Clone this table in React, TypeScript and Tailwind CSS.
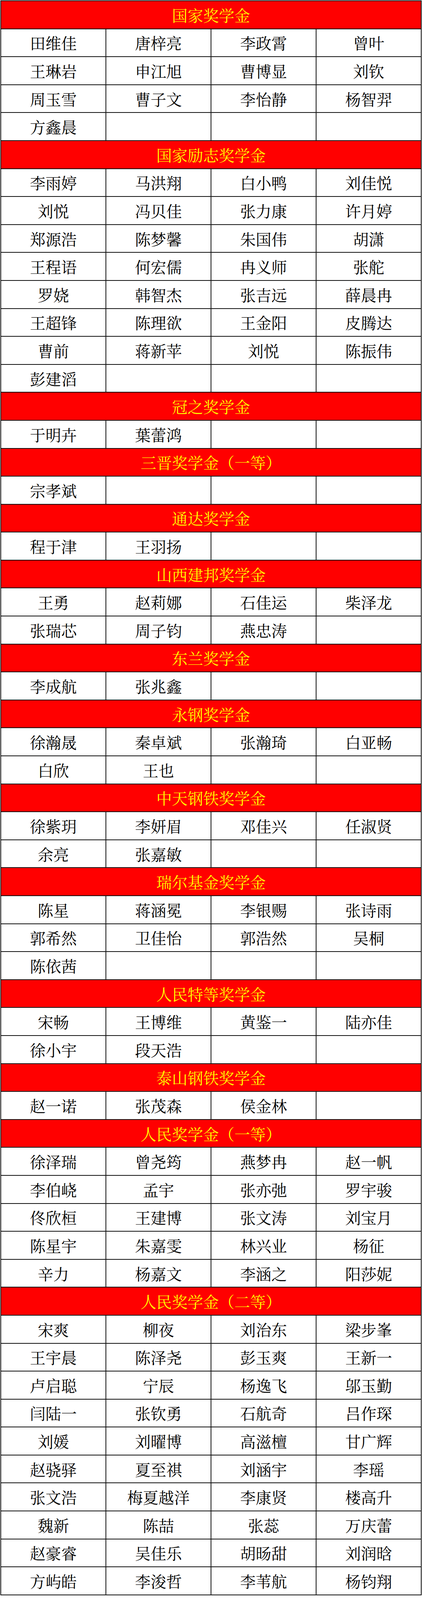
import React from 'react';

type Section = { title: string; names: string[] };

const sections: Section[] = [
  {
    title: '国家奖学金',
    names: ['田维佳', '唐梓亮', '李政霄', '曾叶', '王琳岩', '申江旭', '曹博显', '刘钦', '周玉雪', '曹子文', '李怡静', '杨智羿', '方鑫晨'],
  },
  {
    title: '国家励志奖学金',
    names: [
      '李雨婷', '马洪翔', '白小鸭', '刘佳悦',
      '刘悦', '冯贝佳', '张力康', '许月婷',
      '郑源浩', '陈梦馨', '朱国伟', '胡潇',
      '王程语', '何宏儒', '冉义师', '张舵',
      '罗娆', '韩智杰', '张吉远', '薛晨冉',
      '王超锋', '陈理欲', '王金阳', '皮腾达',
      '曹前', '蒋新苹', '刘悦', '陈振伟',
      '彭建滔',
    ],
  },
  { title: '冠之奖学金', names: ['于明卉', '葉蕾鸿'] },
  { title: '三晋奖学金（一等）', names: ['宗孝斌'] },
  { title: '通达奖学金', names: ['程于津', '王羽扬'] },
  { title: '山西建邦奖学金', names: ['王勇', '赵莉娜', '石佳运', '柴泽龙', '张瑞芯', '周子钧', '燕忠涛'] },
  { title: '东兰奖学金', names: ['李成航', '张兆鑫'] },
  { title: '永钢奖学金', names: ['徐瀚晟', '秦卓斌', '张瀚琦', '白亚畅', '白欣', '王也'] },
  { title: '中天钢铁奖学金', names: ['徐紫玥', '李妍眉', '邓佳兴', '任淑贤', '余亮', '张嘉敏'] },
  {
    title: '瑞尔基金奖学金',
    names: ['陈星', '蒋涵冕', '李银赐', '张诗雨', '郭希然', '卫佳怡', '郭浩然', '吴桐', '陈依茜'],
  },
  { title: '人民特等奖学金', names: ['宋畅', '王博维', '黄鉴一', '陆亦佳', '徐小宇', '段天浩'] },
  { title: '泰山钢铁奖学金', names: ['赵一诺', '张茂森', '侯金林'] },
  {
    title: '人民奖学金（一等）',
    names: [
      '徐泽瑞', '曾尧筠', '燕梦冉', '赵一帆',
      '李伯峣', '孟宇', '张亦弛', '罗宇骏',
      '佟欣桓', '王建博', '张文涛', '刘宝月',
      '陈星宇', '朱嘉雯', '林兴业', '杨征',
      '辛力', '杨嘉文', '李涵之', '阳莎妮',
    ],
  },
  {
    title: '人民奖学金（二等）',
    names: [
      '宋爽', '柳夜', '刘治东', '梁步峯',
      '王宇晨', '陈泽尧', '彭玉爽', '王新一',
      '卢启聪', '宁辰', '杨逸飞', '邬玉勤',
      '闫陆一', '张钦勇', '石航奇', '吕作琛',
      '刘媛', '刘曜博', '高滋檀', '甘广辉',
      '赵骁驿', '夏至祺', '刘涵宇', '李瑶',
      '张文浩', '梅夏越洋', '李康贤', '楼高升',
      '魏新', '陈喆', '张蕊', '万庆蕾',
      '赵豪睿', '吴佳乐', '胡旸甜', '刘润晗',
      '方屿皓', '李浚哲', '李苇航', '杨钧翔',
    ],
  },
];

/* pad a list of names out to whole rows of four */
const toRows = (names: string[]) => {
  const rows: string[][] = [];
  for (let i = 0; i < names.length; i += 4) {
    const row = names.slice(i, i + 4);
    while (row.length < 4) row.push('');
    rows.push(row);
  }
  return rows;
};

export default function App() {
  return (
    <div className="w-full bg-white pt-[1px] px-[1px] pb-[6px] font-['Noto_Serif_CJK_SC','Noto_Sans_CJK_SC',serif]">
      <div className="border-t-2 border-l-2 border-[#111]">
        {sections.map((s) => (
          <SectionBlock key={s.title} section={s} />
        ))}
      </div>
    </div>
  );
}

const SectionBlock = ({ section }: { section: Section }) => (
  <>
    <div className="h-[71.6px] flex items-center justify-center bg-[#ff0000] border-r-2 border-b-2 border-[#111] text-[40px] leading-none text-[#ffff00]">
      {section.title}
    </div>
    {toRows(section.names).map((row, i) => (
      <div key={i} className="grid grid-cols-4">
        {row.map((name, j) => (
          <div
            key={j}
            className="h-[71.6px] flex items-center justify-center border-r-2 border-b-2 border-[#111] text-[40px] leading-none text-black whitespace-nowrap"
          >
            {name}
          </div>
        ))}
      </div>
    ))}
  </>
);
